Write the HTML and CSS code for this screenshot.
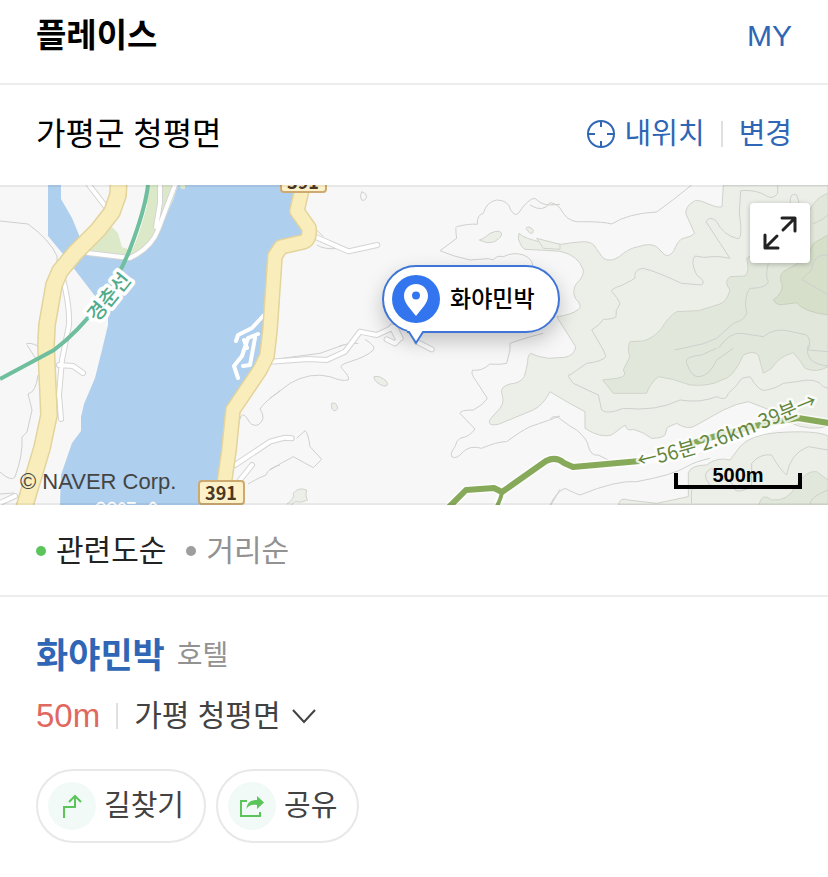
FILE: index.html
```html
<!DOCTYPE html>
<html lang="ko">
<head>
<meta charset="utf-8">
<meta name="viewport" content="width=device-width, initial-scale=1">
<title>플레이스</title>
<link rel="stylesheet" href="styles.css">
</head>
<body>
<main class="place">
  <header class="bar bar-title">
    <h1 class="title">플레이스</h1>
    <a class="link my" href="#my">MY</a>
  </header>
  <section class="bar bar-region">
    <h2 class="region">가평군 청평면</h2>
    <div class="region-tools">
      <button class="link locate" type="button">
        <svg class="icon-target" viewBox="0 0 28 28" aria-hidden="true"><circle cx="14" cy="14" r="13"/><path d="M14 1v6M14 21v6M1 14h7M20 14h7"/></svg>내위치</button>
      <span class="divider"></span>
      <button class="link" type="button">변경</button>
    </div>
  </section>

  <section class="map" aria-label="지도">
    <svg class="map-art" viewBox="0 185 828 320" preserveAspectRatio="xMidYMid slice">
      <rect class="land" y="185" width="828" height="320"/>
      <!-- river -->
      <path class="water" d="M48 185V236L63 254L75 270L95 296L108 315L108 325L102 350L95 378L84 404L81 417V431L72 443L61 475L60 505H215L225 470L232 410L266 360L275 258L304 240L308 230L295 213L303 185Z"/>
      <path class="land" d="M61 185V199L72 218L81 240L90 253L130 259L145 250L156 238L173 200L178 185Z"/>
      <path class="park" d="M85 252L112 227L118 233L122 247L128 249L135 243L147 200L149 185H178L173 200L156 238L146 249L130 258L90 253Z"/>
      <path class="park" d="M180 185h5v4h-4z"/>
      <path d="M132 248Q139 232 146 205" class="lane-thin"/>

      <!-- hills, east side -->
      <g transform="translate(550 180) scale(.33333)">
        <path class="hill-1" d="M520 15L516 80Q505 85 475 72Q440 55 430 65Q405 80 408 102L434 160Q425 170 400 175Q385 178 370 215Q355 232 345 225L320 200Q300 188 265 200Q235 205 208 230Q180 248 160 235L138 205Q130 185 100 185Q60 188 35 193L-20 188Q-80 175-93 160L-95 176Q-85 205-75 208Q-25 210 30 214Q85 225 100 270Q102 290 80 310Q65 330 76 355Q100 380 85 388Q65 405 20 410L77 500Q75 525 45 532L-5 535Q-40 530-58 520Q-67 525-67 545Q-70 565-77 590Q-90 610-120 612Q-150 620-145 640Q-135 665-150 685L-180 718Q-190 740-155 733L-50 690Q-20 675 0 635L55 668L105 695V745Q150 775 185 765L225 735Q230 755 250 748Q280 755 305 775Q335 775 345 765L352 742L380 730Q415 753 440 735L520 690Q560 670 595 665L680 698L720 728Q780 755 834 738V15Z"/>
        <path class="hill-1" d="M834 768Q800 750 680 758Q600 765 570 800L540 840Q500 830 470 855Q420 855 415 880V950L320 970L235 960Q210 950 205 975H834Z"/>
        <path class="hill-2" d="M834 40Q805 50 790 72L760 120L590 235Q600 275 585 288L540 290Q520 305 540 330Q530 365 510 372Q470 385 445 392L380 395Q355 410 335 445Q310 475 280 483L240 485Q230 510 240 530L220 570Q235 590 200 595L158 600L190 640H290Q300 610 325 590Q370 595 420 615Q480 620 515 600Q550 595 580 525Q610 510 625 525L640 580L665 565Q685 530 730 518Q750 540 765 565Q800 580 834 560Z"/>
        <path class="hill-3" d="M834 165L790 190L770 235L700 275Q685 290 697 315Q698 340 670 360Q680 380 710 372L740 368Q760 395 834 405Z"/>
        <path class="hill-2" d="M627 975Q635 935 665 960Q715 965 740 915Q770 870 800 875L834 900V975Z"/>
        <g class="contour">
          <path d="M-60 75Q-20 100 0 68Q25 70 40 100Q60 130 100 125Q160 125 185 132Q235 100 320 96Q370 60 425 15"/>
          <path d="M572 32Q620 28 650 48Q670 60 683 40V15M572 32L568 100Q580 185 560 175Q520 165 500 125Q480 105 468 125L540 235Q510 228 490 230Q460 235 435 228Q420 245 440 285Q470 305 455 315L395 310Q320 275 280 265Q250 268 255 295L218 315Q170 330 190 340Q215 370 208 375Q195 390 198 410Q190 418 160 418Q150 435 125 450L160 510L168 530Q155 545 110 550L60 585Q45 580 70 610L145 645L155 690Q170 705 220 685Q320 695 390 660Q450 670 500 650Q530 665 535 640Q560 620 575 595L600 590Q630 640 650 630Q680 625 700 610L740 605Q800 590 820 620L834 625"/>
          <path d="M720 70Q720 35 740 45L748 70M788 132Q820 120 834 105M655 250Q645 290 655 305Q650 325 600 325Q580 350 590 400Q585 420 550 430L500 475Q460 495 420 500L375 510M505 505Q540 455 575 460L640 470Q675 440 725 455L770 465Q785 480 775 510L834 515M775 495Q760 550 834 558M834 225Q790 220 785 270Q760 290 757 300L834 343"/>
          <path d="M500 505Q475 515 455 525Q400 530 410 550Q425 595 450 590Q480 585 500 540L550 505M0 718Q15 700 35 720Q60 740 80 750Q115 780 115 800Q125 830 145 825L175 840M0 975Q20 935 45 925Q75 940 90 945Q200 900 260 905Q370 885 410 860Q435 845 480 835"/>
          <path d="M425 970Q420 920 435 920L480 915Q450 880 485 865Q550 900 555 930Q565 940 605 920V850Q630 820 665 825Q690 870 710 885Q720 820 775 800L834 810M834 930Q780 950 780 975"/>
        </g>
      </g>

      <!-- contours and paths, middle -->
      <g transform="translate(270 180) scale(.33333)">
        <g class="contour">
          <path d="M275 35Q290 40 290 50Q285 65 275 60Q268 50 275 35ZM788 255Q785 235 760 225Q730 215 700 230Q680 225 670 240L655 236Q630 238 600 240Q550 230 510 212L560 175Q555 140 560 140Q600 130 622 133Q620 105 640 100Q650 65 680 60Q715 60 722 90Q735 110 745 100Q775 55 795 55Q815 75 840 75L870 73"/>
          <path class="hill-1" d="M628 180Q640 178 660 160Q695 145 695 165Q680 190 650 188ZM768 145Q775 135 790 150Q790 165 778 158ZM800 175L870 193V208L820 205ZM312 590Q330 585 350 605Q358 620 340 618Q310 605 312 590ZM185 670Q200 665 203 685Q195 700 185 685ZM50 973Q75 955 70 940Q85 920 110 930Q105 950 113 960Q95 970 75 965L65 975"/>
          <path d="M285 478Q320 500 310 510Q290 530 240 545Q205 555 215 565Q240 590 235 600Q215 605 180 590Q120 575 60 610L0 655M0 870Q40 845 70 830L130 863L155 838L120 800Q115 760 105 752L80 775"/>
          <path d="M140 150L160 170M140 195Q165 210 205 205M720 510V490Q760 475 820 460M720 510L710 550Q690 555 660 552Q635 575 608 570Q600 580 620 605L652 655Q640 675 610 690Q570 690 570 700L615 747Q600 770 570 775Q560 780 555 800Q540 820 545 830Q560 840 580 815Q600 795 635 805Q680 785 710 785Q750 755 780 740Q840 720 870 708M843 975L870 928"/>
          <path d="M35 535L150 520L220 495M265 490Q225 490 205 500"/>
        </g>
        <path class="lane-edge" d="M135 170L235 214L322 195M0 545L115 537L170 540L225 515L270 455L320 465L375 440L392 475M365 440L385 480L375 490L350 478M440 485L485 508M-105 855L0 785L45 773L65 775"/>
        <path class="lane" d="M135 170L235 214L322 195M0 545L115 537L170 540L225 515L270 455L320 465L375 440L392 475M365 440L385 480L375 490L350 478M440 485L485 508M-105 855L0 785L45 773L65 775"/>
      </g>

      <!-- west side -->
      <g class="contour">
        <path d="M0 221L28 224Q50 240 57 256V266M26 344Q30 342 38 346M27 345L36 359M38 375Q36 392 28 394Q30 402 32 410L27 432L22 437Q23 455 15 477Q11 482 0 472M0 494L14 493M238 430Q240 408 247 418Q251 427 258 425Q267 419 260 409Q264 402 280 391M248 484Q258 478 266 475Q268 468 280 465"/>
      </g>
      <path class="lane-edge" d="M89 185L106 207M62 275Q70 305 69 325L62 360L59 395L61 419M59 365L73 366L83 373M88 253L130 258Q151 248 158 230L175 185M160 185V203L156 227M240 480L252 465M0 503L15 496"/>
      <path class="lane" d="M89 185L106 207M62 275Q70 305 69 325L62 360L59 395L61 419M59 365L73 366L83 373M88 253L130 258Q151 248 158 230L175 185M160 185V203L156 227M240 480L252 465M0 503L15 496"/>
      <path class="lane pier" d="M264 315L252 328L238 335L236 341M258 334L248 338L242 356L234 366L238 378M255 338L250 365L243 366M247 348L244 340"/>

      <path class="road-edge" d="M119 175L118 195L112 212L98 230L76 252L60 271L54 285L47 325L46 345L49 415L42 448L22 515"/>
      <path class="road" d="M119 175L118 195L112 212L98 230L76 252L60 271L54 285L47 325L46 345L49 415L42 448L22 515"/>
      <path class="road-edge narrow" d="M303 185L297 211L309 228Q310 240 303 242L281 247L275 256L270 330L267 356L260 370L233 410L229 450L224 485"/>
      <path class="road narrow" d="M303 185L297 211L309 228Q310 240 303 242L281 247L275 256L270 330L267 356L260 370L233 410L229 450L224 485"/>

      <path class="rail" d="M148 185Q145 210 130 249Q120 275 100 303Q77 333 54 350L0 379"/>
      <text class="rail-label" transform="translate(97 323) rotate(-51)">경춘선</text>

      <path class="trail-halo" d="M446 510L466 490L494 488L502 492L546 461Q556 456 564 463L573 467L640 461Q720 445 798 418L835 424M502 492Q501 499 496 508"/>
      <path class="trail" d="M446 510L466 490L494 488L502 492L546 461Q556 456 564 463L573 467L640 461"/>
      <path class="trail thin" d="M502 492Q501 499 496 508"/>
      <path class="trail" d="M690 444Q745 426 798 418L835 424"/>
      <path id="trail-line" fill="none" d="M639 468Q710 452 765 428L840 397"/>
      <text class="trail-label"><textPath href="#trail-line">←56분 2.6km 39분→</textPath></text>

      <rect class="shield" x="281" y="169" width="45" height="23" rx="3"/>
      <text class="shield-text" x="303" y="189">391</text>
      <rect class="shield" x="199" y="481" width="45" height="23" rx="3"/>
      <text class="shield-text" x="221" y="500">391</text>
      <path d="M97 505q4-5 8 0m3 0q4-5 8 0m3 0q3-4 6 0m3-2h7m15 2q3-5 6 0" class="lane-thin"/>
    </svg>
    <small class="copyright">© NAVER Corp.</small>
    <div class="scale">500m</div>
    <button class="expand" type="button" aria-label="지도 확대">
      <svg viewBox="0 0 60 60" aria-hidden="true"><path d="M32 15H45V28M45 15L33 27M15 32V45H28M15 45L27 33"/></svg>
    </button>
    <a class="pin" href="#place">
      <svg class="pin-mark" viewBox="0 0 48 48" aria-hidden="true"><circle class="pin-disc" cx="24" cy="24" r="24"/><path class="pin-drop" fill-rule="evenodd" d="M24 9C17 9 12 14 12 21C12 28 18 33 24 41C30 33 36 28 36 21C36 14 31 9 24 9ZM24 16.500A4 4 0 0 1 24 24.500A4 4 0 0 1 24 16.500Z"/></svg>
      <span>화야민박</span>
      <svg class="pin-tail" viewBox="0 0 18 16" aria-hidden="true"><path class="tail-fill" d="M0 0H18L16 3L9 14L2 3Z"/><path class="tail-line" d="M0 2H2L9 13L16 2H18"/></svg>
    </a>
  </section>

  <nav class="sorts" aria-label="정렬">
    <button class="sort current" type="button" aria-pressed="true">관련도순</button>
    <button class="sort" type="button" aria-pressed="false">거리순</button>
  </nav>

  <article class="result" id="place">
    <div class="name-row"><a class="name" href="#detail">화야민박</a><span class="kind">호텔</span></div>
    <div class="where">
      <span class="distance">50m</span><span class="divider"></span>
      <button class="address" type="button">가평 청평면<svg class="chevron" viewBox="0 0 26 16" aria-hidden="true"><path d="M2 2L13 14L24 2"/></svg></button>
    </div>
    <div class="actions">
      <button class="action" type="button"><svg viewBox="0 0 48 48" aria-hidden="true"><circle cx="24" cy="24" r="24"/><path class="stroke" d="M16 36V25H27V14M21 20L27 14L33 20"/></svg>길찾기</button>
      <button class="action" type="button"><svg viewBox="0 0 48 48" aria-hidden="true"><circle cx="24" cy="24" r="24"/><path class="stroke" d="M19 19H13V34H32V30"/><path class="solid" d="M29 14L36 20.500L29 27V23C23 22 20 24 18.500 27C19 21 22 18 29 18Z"/></svg>공유</button>
    </div>
  </article>
</main>
</body>
</html>
```
FILE: styles.css
```css
* { box-sizing: border-box; }
body {
  margin: 0;
  background: #fff;
  color: #000;
  font-family: "Liberation Sans", "Noto Sans CJK KR", sans-serif;
  font-size: 30px;
  line-height: 40px;
}
button {
  padding: 0;
  border: 0;
  background: none;
  color: inherit;
  font: inherit;
}
a { color: inherit; text-decoration: none; }
h1, h2 { margin: 0; font-weight: 400; }
svg { display: block; flex: none; }

.bar {
  display: flex;
  align-items: center;
  justify-content: space-between;
  padding: 0 36px;
}
.bar-title {
  height: 85px;
  padding-bottom: 12px;
  border-bottom: 2px solid #eceeee;
}
.title { font-size: 33px; font-weight: 700; }
.bar-region { height: 100px; padding-bottom: 2px; }
.region { font-size: 32px; }
.region-tools { display: flex; align-items: center; gap: 16px; }
.link { color: #2f66b5; }
.region-tools .link { font-size: 29px; }
.locate { display: flex; align-items: center; gap: 10px; }
.icon-target { width: 28px; height: 28px; }
.icon-target * { fill: none; stroke: #2f66b5; stroke-width: 2; }
.divider { width: 2px; height: 26px; background: #e0e0e0; }

.map { position: relative; height: 320px; overflow: hidden; }
.map::after {
  content: "";
  position: absolute;
  inset: 0;
  border: solid rgba(0, 0, 0, .06);
  border-width: 2px 0;
  pointer-events: none;
}
.map-art { width: 100%; height: 100%; }
.land { fill: #f7f7f7; }
.water { fill: #aecfed; }
.park { fill: #dce9c9; }
.hill-1 { fill: #ecefe8; stroke: #d0d2cc; stroke-width: 3; }
.hill-2 { fill: #e1e7da; stroke: #cfd4c9; stroke-width: 3; }
.hill-3 { fill: #d6dfca; stroke: #c8d0bd; stroke-width: 3; }
.contour { fill: none; stroke: #cfcfcd; stroke-width: 1; stroke-linejoin: round; }
g[transform] .contour { stroke-width: 3; }
.contour .hill-1 { fill: #ecefe8; }
.lane, .lane-edge, .lane-thin { fill: none; stroke: #fff; stroke-width: 4; stroke-linejoin: round; stroke-linecap: round; }
.lane-thin { stroke-width: 2; }
.lane-edge { stroke: #d4d4d4; stroke-width: 6; }
g[transform] .lane { stroke-width: 12; }
g[transform] .lane-edge { stroke-width: 18; }
.road, .road-edge { fill: none; stroke: #f9eebb; stroke-width: 15; stroke-linejoin: round; }
.road-edge { stroke: #e3d39c; stroke-width: 18; }
.road.narrow { stroke-width: 13; }
.road-edge.narrow { stroke-width: 16; }
.rail { fill: none; stroke: #6fbf9e; stroke-width: 4; }
.rail-label, .trail-label, .shield-text { font-family: "Noto Sans CJK KR", sans-serif; }
.rail-label { fill: #4fab89; stroke: #fff; stroke-width: 7; stroke-linejoin: round; paint-order: stroke; font-size: 20px; font-weight: 500; }
.trail, .trail-halo { fill: none; stroke: #86a95a; stroke-width: 6; stroke-linejoin: round; }
.trail.thin { stroke-width: 4; }
.trail-halo { stroke: #fff; stroke-width: 9; stroke-opacity: .7; }
.trail-label { fill: #64863c; stroke: #fff; stroke-opacity: .8; stroke-width: 5; stroke-linejoin: round; paint-order: stroke; font-size: 20px; }
.shield { fill: #fcf1c8; stroke: #cdaa71; stroke-width: 2; }
.shield-text { fill: #4b3722; font-size: 18px; font-weight: 700; text-anchor: middle; }

.copyright {
  position: absolute;
  left: 20px;
  bottom: 7px;
  color: #444;
  font-size: 22px;
  line-height: 32px;
}
.scale {
  position: absolute;
  right: 26px;
  bottom: 16px;
  width: 128px;
  height: 16px;
  border: 4px solid #000;
  border-top: 0;
  font-size: 20px;
  font-weight: 700;
  line-height: 4px;
  text-align: center;
}
.expand {
  position: absolute;
  top: 18px;
  right: 18px;
  width: 60px;
  height: 60px;
  border-radius: 4px;
  background: #fff;
  box-shadow: 0 1px 5px rgba(0, 0, 0, .25);
}
.expand path { fill: none; stroke: #222; stroke-width: 3; stroke-linecap: round; stroke-linejoin: round; }
.pin {
  position: absolute;
  top: 80px;
  left: 50%;
  display: flex;
  align-items: center;
  gap: 10px;
  height: 68px;
  margin-left: -32px;
  padding: 0 23px 0 8px;
  border: 2px solid #3f75d6;
  border-radius: 34px;
  background: #fff;
  box-shadow: 0 8px 20px rgba(0, 0, 0, .22);
  font-size: 23px;
  font-weight: 500;
}
.pin-mark { width: 48px; height: 48px; }
.pin-disc { fill: #3375ee; }
.pin-drop { fill: #fff; }
.pin-tail { position: absolute; top: 63px; left: 23px; width: 18px; height: 16px; }
.tail-fill { fill: #fff; }
.tail-line { fill: none; stroke: #3f75d6; stroke-width: 2; }

.sorts {
  display: flex;
  align-items: center;
  gap: 20px;
  height: 92px;
  padding: 2px 36px 0;
  border-bottom: 2px solid #eceeee;
}
.sort { display: flex; align-items: center; gap: 10px; color: #929292; }
.sort::before { content: ""; width: 10px; height: 10px; border-radius: 50%; background: #9e9e9e; }
.current { color: #222; }
.current::before { background: #5bc45b; }

.result { padding: 39px 36px; }
.name-row { display: flex; align-items: center; gap: 12px; }
.name { color: #2f66b5; font-size: 35px; font-weight: 700; }
.kind { color: #929292; font-size: 28px; }
.where { display: flex; align-items: center; gap: 16px; margin-top: 20px; color: #424242; }
.distance { color: #e0685f; font-size: 33px; }
.address { display: flex; align-items: center; gap: 10px; }
.chevron { width: 26px; height: 16px; }
.chevron path { fill: none; stroke: #424242; stroke-width: 2; }
.actions { display: flex; gap: 10px; margin-top: 33px; }
.action {
  display: flex;
  align-items: center;
  gap: 8px;
  height: 74px;
  padding: 0 20px 0 10px;
  border: 2px solid #e8e8e8;
  border-radius: 37px;
  background: #fff;
  color: #424242;
  font-size: 29px;
}
.action svg { width: 48px; height: 48px; }
.action circle { fill: #f1faf6; }
.stroke { fill: none; stroke: #5bc45b; stroke-width: 2; }
.solid { fill: #5bc45b; }
```
